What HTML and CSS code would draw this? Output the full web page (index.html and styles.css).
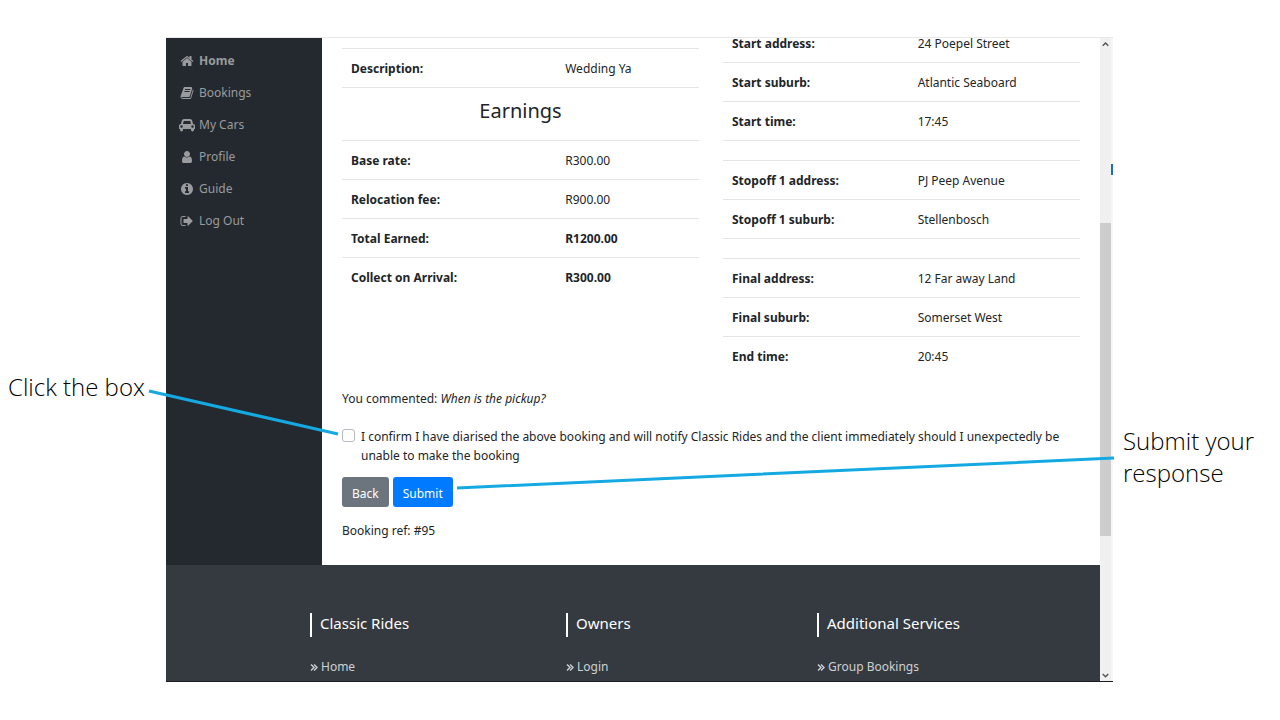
FILE: index.html
```html
<!DOCTYPE html>
<html lang="en">
<head>
    <meta charset="UTF-8">
    <meta name="viewport" content="width=device-width, initial-scale=1.0">
    <title>Classic Rides - Booking</title>
    <link rel="stylesheet" href="styles.css">
</head>
<body>

    <div class="slide">
        <p class="callout callout-left">Click the box</p>

        <div class="window">
            <div class="page">
                <div class="layout">
                    <nav class="sidebar">
                        <a href="#" class="active">
                            <svg class="icon" viewBox="0 0 1792 1792"><path d="M1472 992v480q0 26-19 45t-45 19h-384v-384h-256v384h-384q-26 0-45-19t-19-45v-480q0-1 .5-3t.5-3l575-474 575 474q1 2 1 6zm223-69l-62 74q-8 9-21 11h-3q-13 0-21-7l-692-577-692 577q-12 8-24 7-13-2-21-11l-62-74q-8-10-7-23.5t11-21.5l719-599q32-26 76-26t76 26l244 204v-195q0-14 9-23t23-9h192q14 0 23 9t9 23v408l219 182q10 8 11 21.5t-7 23.5z"/></svg>
                            Home
                        </a>
                        <a href="#">
                            <svg class="icon" viewBox="0 0 1792 1792"><path d="M1703 478q40 57 18 129l-275 906q-19 64-76.5 107.5t-122.5 43.5h-923q-77 0-148.5-53.5t-99.5-131.5q-24-67-2-127 0-4 3-27t4-37q1-8-3-21.5t-3-19.5q2-11 8-21t16.5-23.5 16.5-23.5q23-38 45-91.5t30-91.5q3-10 .5-30t-.5-28q3-11 17-28t17-23q21-36 42-92t25-90q1-9-2.5-32t.5-28q4-13 22-30.5t22-22.5q19-26 42.5-84.5t27.5-96.5q1-8-3-25.5t-2-26.5q2-8 9-18t18-23 17-21q8-12 16.5-30.5t15-35 16-36 19.5-32 26.5-23.5 36-11.5 47.5 5.5l-1 3q38-9 51-9h761q74 0 114 56t18 130l-274 906q-36 119-71.5 153.5t-128.5 34.5h-869q-27 0-38 15-11 16-1 43 24 70 144 70h923q29 0 56-15.5t35-41.5l300-987q7-22 5-57 38 15 59 43zm-1064 2q-4 13 2 22.5t20 9.5h608q13 0 25.5-9.5t16.5-22.5l21-64q4-13-2-22.5t-20-9.5h-608q-13 0-25.5 9.5t-16.5 22.5zm-83 256q-4 13 2 22.5t20 9.5h608q13 0 25.5-9.5t16.5-22.5l21-64q4-13-2-22.5t-20-9.5h-608q-13 0-25.5 9.5t-16.5 22.5z"/></svg>
                            Bookings
                        </a>
                        <a href="#">
                            <svg class="icon" viewBox="0 0 2048 1792"><path d="M480 1088q0-66-47-113t-113-47-113 47-47 113 47 113 113 47 113-47 47-113zm36-320h1016l-89-357q-2-8-14-17.5t-21-9.5h-768q-9 0-21 9.5t-14 17.5zm1372 320q0-66-47-113t-113-47-113 47-47 113 47 113 113 47 113-47 47-113zm160-96v384q0 14-9 23t-23 9h-96v128q0 80-56 136t-136 56-136-56-56-136v-128h-1024v128q0 80-56 136t-136 56-136-56-56-136v-128h-96q-14 0-23-9t-9-23v-384q0-93 65.5-158.5t158.5-65.5h28l105-419q23-94 104-157.5t179-63.5h768q98 0 179 63.5t104 157.5l105 419h28q93 0 158.5 65.5t65.5 158.5z"/></svg>
                            My Cars
                        </a>
                        <a href="#">
                            <svg class="icon" viewBox="0 0 1792 1792"><path d="M1536 1399q0 109-62.5 187t-150.5 78h-854q-88 0-150.5-78t-62.5-187q0-85 8.5-160.5t31.5-152 58.5-131 94-89 134.5-34.5q131 128 313 128t313-128q76 0 134.5 34.5t94 89 58.5 131 31.5 152 8.5 160.5zm-256-887q0 159-112.5 271.5t-271.5 112.5-271.5-112.5-112.5-271.5 112.5-271.5 271.5-112.5 271.5 112.5 112.5 271.5z"/></svg>
                            Profile
                        </a>
                        <a href="#">
                            <svg class="icon" viewBox="0 0 1792 1792"><path d="M1152 1376v-160q0-14-9-23t-23-9h-96v-512q0-14-9-23t-23-9h-320q-14 0-23 9t-9 23v160q0 14 9 23t23 9h96v320h-96q-14 0-23 9t-9 23v160q0 14 9 23t23 9h448q14 0 23-9t9-23zm-128-896v-160q0-14-9-23t-23-9h-192q-14 0-23 9t-9 23v160q0 14 9 23t23 9h192q14 0 23-9t9-23zm640 416q0 209-103 385.5t-279.5 279.5-385.5 103-385.5-103-279.5-279.5-103-385.5 103-385.5 279.5-279.5 385.5-103 385.5 103 279.5 279.5 103 385.5z"/></svg>
                            Guide
                        </a>
                        <a href="#">
                            <svg class="icon" viewBox="0 0 1792 1792"><path d="M704 1440q0 4 1 20t.5 26.5-3 23.5-10 19.5-20.5 6.5h-320q-119 0-203.5-84.5t-84.5-203.5v-704q0-119 84.5-203.5t203.5-84.5h320q13 0 22.5 9.5t9.5 22.5q0 4 1 20t.5 26.5-3 23.5-10 19.5-20.5 6.5h-320q-66 0-113 47t-47 113v704q0 66 47 113t113 47h312l11.5 1 11.5 3 8 5.5 7 9 2 13.5zm928-544q0 26-19 45l-544 544q-19 19-45 19t-45-19-19-45v-288h-448q-26 0-45-19t-19-45v-384q0-26 19-45t45-19h448v-288q0-26 19-45t45-19 45 19l544 544q19 19 19 45z"/></svg>
                            Log Out
                        </a>
                    </nav>

                    <main class="content">
                        <div class="columns">
                            <div class="earnings">
                                <table>
                                    <tr><th>Description:</th><td>Wedding Ya</td></tr>
                                    <tr><td colspan="2" class="heading"><h2>Earnings</h2></td></tr>
                                    <tr><th>Base rate:</th><td>R300.00</td></tr>
                                    <tr><th>Relocation fee:</th><td>R900.00</td></tr>
                                    <tr class="total"><th>Total Earned:</th><td>R1200.00</td></tr>
                                    <tr class="total"><th>Collect on Arrival:</th><td>R300.00</td></tr>
                                </table>
                            </div>
                            <div class="trip">
                                <table>
                                    <tr><th>Start address:</th><td>24 Poepel Street</td></tr>
                                    <tr><th>Start suburb:</th><td>Atlantic Seaboard</td></tr>
                                    <tr><th>Start time:</th><td>17:45</td></tr>
                                    <tr class="spacer"><td colspan="2"></td></tr>
                                    <tr><th>Stopoff 1 address:</th><td>PJ Peep Avenue</td></tr>
                                    <tr><th>Stopoff 1 suburb:</th><td>Stellenbosch</td></tr>
                                    <tr class="spacer"><td colspan="2"></td></tr>
                                    <tr><th>Final address:</th><td>12 Far away Land</td></tr>
                                    <tr><th>Final suburb:</th><td>Somerset West</td></tr>
                                    <tr><th>End time:</th><td>20:45</td></tr>
                                </table>
                            </div>
                        </div>

                        <form class="confirm-form">
                            <p>You commented: <em>When is the pickup?</em></p>
                            <div class="confirm">
                                <input type="checkbox" id="confirm">
                                <label for="confirm">I confirm I have diarised the above booking and will notify Classic Rides and the client immediately should I unexpectedly be unable to make the booking</label>
                            </div>
                            <div class="buttons">
                                <button type="button" class="btn btn-back">Back</button>
                                <button type="submit" class="btn btn-submit">Submit</button>
                            </div>
                            <p>Booking ref: #95</p>
                        </form>
                    </main>
                </div>

                <footer class="footer">
                    <div>
                        <h3>Classic Rides</h3>
                        <a href="#"><svg class="arrows" viewBox="0 0 8 8"><path d="M1 1l3 3-3 3M4 1l3 3-3 3"/></svg>Home</a>
                    </div>
                    <div>
                        <h3>Owners</h3>
                        <a href="#"><svg class="arrows" viewBox="0 0 8 8"><path d="M1 1l3 3-3 3M4 1l3 3-3 3"/></svg>Login</a>
                    </div>
                    <div>
                        <h3>Additional Services</h3>
                        <a href="#"><svg class="arrows" viewBox="0 0 8 8"><path d="M1 1l3 3-3 3M4 1l3 3-3 3"/></svg>Group Bookings</a>
                    </div>
                </footer>
            </div>

            <div class="scrollbar">
                <svg viewBox="0 0 12 12"><path d="M3 8l3-3 3 3"/></svg>
                <div class="track-top"></div>
                <div class="thumb"></div>
                <div class="track-bottom"></div>
                <svg viewBox="0 0 12 12"><path d="M3 5l3 3 3-3"/></svg>
            </div>
            <span class="marker"></span>
        </div>

        <p class="callout callout-right">Submit your response</p>

        <svg class="pointers" viewBox="0 0 1280 720" preserveAspectRatio="none">
            <path d="M149 391L338 434M457 488L1114 458"/>
        </svg>
    </div>

</body>
</html>
```
FILE: styles.css
```css
* {
    box-sizing: border-box;
}

body {
    margin: 0;
    background-color: #fff;
    color: #212529;
    font-family: "Noto Sans", "Open Sans", sans-serif;
    font-size: 12px;
    line-height: 20px;
}

p, h2, h3 {
    margin: 0;
    font-weight: normal;
}

a {
    text-decoration: none;
}

/* Slide with the notes either side of the window */
.slide {
    position: relative;
    display: grid;
    grid-template-columns: 166px 1fr 167px;
    height: 100vh;
    padding: 37px 0 38px;
}

.callout {
    color: #000;
    font-family: "Open Sans", "Noto Sans", sans-serif;
    font-size: 24px;
    font-weight: 300;
    line-height: 32px;
}

.callout-left {
    padding: 334px 0 0 8px;
}

.callout-right {
    padding: 388px 20px 0 10px;
}

.pointers {
    position: absolute;
    inset: 0;
    width: 100%;
    height: 100%;
    fill: none;
    stroke: #14a9e1;
    stroke-width: 3;
    pointer-events: none;
}

.window {
    position: relative;
    display: flex;
    min-height: 0;
    border-top: 1px solid #e8e8e8;
    border-bottom: 1px solid #1c1e22;
}

.page {
    display: flex;
    flex-direction: column;
    flex: 1;
    overflow: hidden;
}

.layout {
    display: flex;
}

/* Sidebar */
.sidebar {
    width: 156px;
    padding: 7px 13px;
    background-color: #24292f;
}

.sidebar a {
    display: flex;
    align-items: center;
    gap: 4px;
    height: 32px;
    color: #999b9e;
}

.sidebar .active {
    font-weight: bold;
}

.icon {
    width: 16px;
    height: 14px;
    fill: currentColor;
}

/* Booking details */
.content {
    flex: 1;
    padding: 0 20px 24px;
}

.columns {
    display: grid;
    grid-template-columns: 1fr 1fr;
    gap: 24px;
}

.earnings {
    padding-top: 10px;
}

/* the top of this table is scrolled out of view */
.trip {
    margin-top: -15px;
}

table {
    width: 100%;
    border-collapse: separate;
    border-spacing: 0;
    table-layout: fixed;
}

th, td {
    padding: 10px 9px 8px;
    border-top: 1px solid #e3e5e8;
    text-align: left;
}

th {
    width: 60%;
}

.trip th {
    width: 52%;
}

.heading {
    height: 53px;
    padding: 8px 9px 14px;
    text-align: center;
}

h2 {
    font-size: 20px;
    line-height: 30px;
}

.total td {
    font-weight: bold;
}

.spacer td {
    height: 20px;
    padding: 0;
}

.confirm-form {
    padding-top: 14px;
}

.confirm {
    display: flex;
    gap: 6px;
    margin: 18px 0 12px;
    line-height: 19px;
}

.confirm input {
    appearance: none;
    flex: none;
    width: 13px;
    height: 13px;
    margin: 2px 0;
    border: 1px solid #b5bbc2;
    border-radius: 3px;
    background-color: #fff;
}

.confirm input:checked {
    background-color: #007bff;
}

.buttons {
    display: flex;
    gap: 4px;
    margin-bottom: 14px;
}

.btn {
    height: 30px;
    padding: 3px 10px 0;
    border: none;
    border-radius: 3px;
    color: #fff;
    font: inherit;
    cursor: pointer;
}

.btn-back {
    background-color: #6c757d;
}

.btn-submit {
    background-color: #007bff;
}

/* Footer */
.footer {
    display: grid;
    grid-template-columns: 256fr 251fr 283fr;
    flex: 1;
    padding: 48px 0 0 144px;
    background-color: #343a40;
}

.footer h3 {
    margin-bottom: 20px;
    padding: 0 0 3px 8px;
    border-left: 2px solid #fff;
    color: #fff;
    font-size: 15px;
    line-height: 21px;
}

.footer a {
    display: flex;
    align-items: center;
    gap: 3px;
    color: #cfd1d3;
}

.arrows {
    width: 8px;
    height: 9px;
    fill: none;
    stroke: currentColor;
    stroke-width: 1.4;
}

/* Scrollbar */
.scrollbar {
    display: flex;
    flex-direction: column;
    width: 13px;
    border-right: 2px solid #f6f6f6;
    background-color: #f0f0f0;
}

.scrollbar svg {
    height: 12px;
    fill: none;
    stroke: #505050;
    stroke-width: 1.5;
}

.track-top {
    flex: 173;
}

.thumb {
    flex: 313;
    background-color: #cdcdcd;
}

.track-bottom {
    flex: 133;
}

.marker {
    position: absolute;
    top: 126px;
    right: 0;
    width: 2px;
    height: 11px;
    background-color: #1b6fb8;
}
```
